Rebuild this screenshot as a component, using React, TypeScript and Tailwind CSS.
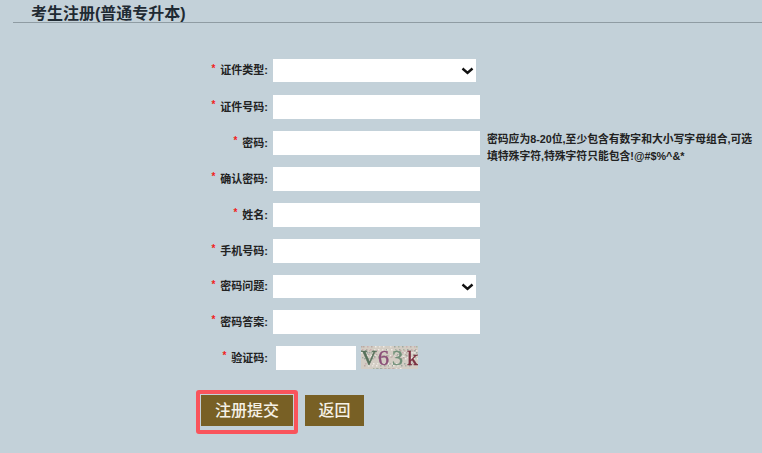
const cjk = '"Liberation Sans", "Noto Sans CJK SC", sans-serif';

const rows = [
  { label: '证件类型', type: 'select', h: 'h-[23px]', mb: 'mb-[13px]' },
  { label: '证件号码', type: 'input', h: 'h-6', mb: 'mb-3' },
  { label: '密码', type: 'input', h: 'h-6', mb: 'mb-3', hint: true },
  { label: '确认密码', type: 'input', h: 'h-6', mb: 'mb-3' },
  { label: '姓名', type: 'input', h: 'h-6', mb: 'mb-3' },
  { label: '手机号码', type: 'input', h: 'h-6', mb: 'mb-3' },
  { label: '密码问题', type: 'select', h: 'h-[23px]', mb: 'mb-3' },
  { label: '密码答案', type: 'input', h: 'h-6', mb: 'mb-3' },
];

// speckle for the captcha background
const speckColors = ['#b9aaa4', '#e8e4dc', '#a9b5a4', '#c9b0b0', '#f0ece6', '#9fa8a0'];
const specks = Array.from({ length: 170 }, (_, i) => ({
  x: (i * 37) % 57,
  y: (i * i * 7 + i * 3) % 23,
  color: speckColors[(i * 5 + (i % 7)) % speckColors.length],
}));

function Label({ text }: { text: string }) {
  return (
    <div className="w-[268px] flex justify-end items-center text-[11px] font-bold text-[#222] leading-none">
      <span className="text-[#f02020] text-[10px] mr-[5px] -mt-[4px]">*</span>
      <span>{text}:</span>
    </div>
  );
}

function Captcha() {
  return (
    <div className="relative w-[57px] h-[23px] ml-[5px] bg-[#d3cdc4] overflow-hidden flex items-center justify-center">
      <svg className="absolute inset-0 blur-[0.5px]" width="57" height="23" viewBox="0 0 57 23">
        {specks.map((s, i) => (
          <rect key={i} x={s.x} y={s.y} width="1.5" height="1.5" fill={s.color} />
        ))}
      </svg>
      <span className="relative text-[22px] leading-none blur-[0.3px] [font-family:'Liberation_Serif',serif] [-webkit-text-stroke:0.4px_currentColor]">
        <span className="text-[#55705a]">V</span>
        <span className="text-[#8a4f78] ml-[1px]">6</span>
        <span className="text-[#6f8f78] ml-[3px]">3</span>
        <span className="text-[#7a3040] ml-[4px]">k</span>
      </span>
    </div>
  );
}

export default function App() {
  return (
    <div className="relative w-[762px] h-[453px] overflow-hidden bg-[#c3d1d9]" style={{ fontFamily: cjk }}>
      <div className="ml-[13px] h-[23px] border-b border-[#8f9ca3] pl-[18px] pt-[4px]">
        <div className="text-[16px] font-bold leading-[20px] text-[#1f2a33]">考生注册(普通专升本)</div>
      </div>

      <div className="pt-9">
        {rows.map((row) => (
          <div key={row.label} className={`relative flex ${row.mb}`}>
            <Label text={row.label} />
            {row.type === 'select' ? (
              <div className="relative ml-[5px]">
                <select className={`block w-[203px] ${row.h} bg-white border-0 outline-none appearance-none text-[10px]`} />
                <svg className="absolute left-[188px] top-[8px]" width="13" height="8" viewBox="0 0 13 8">
                  <path d="M1.5 1.5 L6.5 6 L11.5 1.5" stroke="#111" strokeWidth="2.4" fill="none" />
                </svg>
              </div>
            ) : (
              <input className={`ml-[5px] w-[207px] ${row.h} bg-white border-0 outline-none`} />
            )}
            {row.hint && (
              <div className="absolute left-[487px] top-0 w-[270px] text-[10.8px] font-bold leading-[17px] text-[#222]">
                密码应为8-20位,至少包含有数字和大小写字母组合,可选填特殊字符,特殊字符只能包含!@#$%^&amp;*
              </div>
            )}
          </div>
        ))}

        <div className="flex">
          <Label text="验证码" />
          <input className="ml-[8px] w-20 h-6 bg-white border-0 outline-none" />
          <Captcha />
        </div>

        <div className="relative flex items-center ml-[201px] mt-[25px]">
          <button className="w-[92px] h-[31px] bg-[#786025] text-[#f5f1e6] text-base font-medium">注册提交</button>
          <button className="ml-3 w-[59px] h-[31px] bg-[#786025] text-[#f5f1e6] text-base font-medium">返回</button>
          <div className="absolute -left-[5px] -top-[5px] w-[102px] h-[44px] border-[4px] border-[#f9545c] rounded-[3px]" />
        </div>
      </div>
    </div>
  );
}
